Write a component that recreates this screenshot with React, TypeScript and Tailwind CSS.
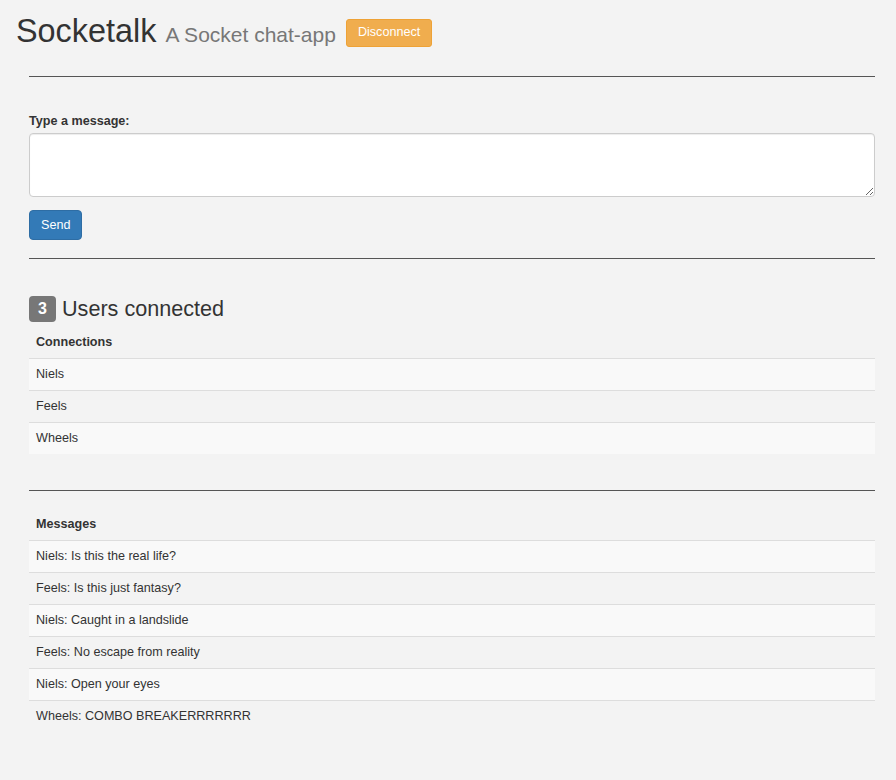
const connections = ["Niels", "Feels", "Wheels"];

const messages = [
  "Niels: Is this the real life?",
  "Feels: Is this just fantasy?",
  "Niels: Caught in a landslide",
  "Feels: No escape from reality",
  "Niels: Open your eyes",
  "Wheels: COMBO BREAKERRRRRRR",
];

function ListTable({ title, rows }: { title: string; rows: string[] }) {
  return (
    <table className="w-full text-left text-[12.6px] leading-[17px] text-[#333]">
      <thead>
        <tr>
          <th className="border-b border-[#ddd] px-[7px] py-[7px] font-bold">{title}</th>
        </tr>
      </thead>
      <tbody>
        {rows.map((row, i) => (
          <tr key={row} className={i % 2 === 0 ? "bg-[#f9f9f9]" : ""}>
            <td className="border-t border-[#ddd] px-[7px] py-[7px]">{row}</td>
          </tr>
        ))}
      </tbody>
    </table>
  );
}

export default function App() {
  return (
    <div className="min-h-[780px] bg-[#f3f3f3] font-['Liberation_Sans',Arial,sans-serif] text-[#333]">
      <div className="flex items-center gap-[10px] px-[16px] pt-[13px]">
        <h1 className="text-[32.4px] leading-[36px] text-[#333]">
          Socketalk{" "}
          <small className="text-[21px] text-[#777]">A Socket chat-app</small>
        </h1>
        <button
          type="button"
          className="mt-[-1px] h-[28px] rounded-[3px] border border-[#eea236] bg-[#f0ad4e] px-[11px] text-[12.6px] text-white"
        >
          Disconnect
        </button>
      </div>

      <div className="pl-[29px] pr-[21px] pt-[23px]">
        <hr className="border-t border-[#555]" />

        <div className="pt-[35px]">
          <label className="block text-[12.6px] font-bold leading-[18px]">Type a message:</label>
          <textarea className="mt-[3px] block h-[64px] w-full rounded-[4px] border border-[#ccc] bg-white shadow-[inset_0_1px_1px_rgba(0,0,0,0.075)]" />
          <button
            type="button"
            className="mt-[13px] h-[30px] rounded-[4px] border border-[#2e6da4] bg-[#337ab7] px-[11px] text-[12.6px] text-white"
          >
            Send
          </button>
        </div>

        <hr className="mt-[18px] border-t border-[#555]" />

        <div className="mt-[37px] flex items-center gap-[6px]">
          <span className="flex h-[26px] w-[27px] items-center justify-center rounded-[4px] bg-[#777] text-[16px] font-bold text-white">
            3
          </span>
          <h3 className="text-[21.6px] leading-[24px]">Users connected</h3>
        </div>
        <div className="mt-[5px]">
          <ListTable title="Connections" rows={connections} />
        </div>

        <hr className="mt-[36px] border-t border-[#555]" />

        <div className="mt-[18px]">
          <ListTable title="Messages" rows={messages} />
        </div>
      </div>
    </div>
  );
}
